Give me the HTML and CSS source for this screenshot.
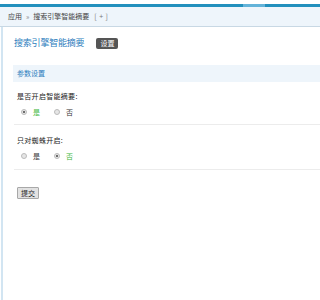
FILE: index.html
```html
<!DOCTYPE html>
<html lang="zh">
<head>
<meta charset="utf-8">
<title>搜索引擎智能摘要</title>
<link rel="stylesheet" href="styles.css">
</head>
<body>
<div class="topbar"><span class="glint"></span></div>
<div class="crumb"><span>应用</span><span class="sep">»</span><span>搜索引擎智能摘要</span><span class="plus">[+]</span></div>
<div class="main">
  <div class="title-row">
    <span class="title">搜索引擎智能摘要</span>
    <span class="badge">设置</span>
  </div>
  <div class="section-head">参数设置</div>
  <div class="field">
    <div class="label">是否开启智能摘要:</div>
    <div class="choices">
      <span class="radio checked"></span><span class="opt on">是</span>
      <span class="radio"></span><span class="opt">否</span>
    </div>
  </div>
  <div class="field">
    <div class="label">只对蜘蛛开启:</div>
    <div class="choices">
      <span class="radio"></span><span class="opt">是</span>
      <span class="radio checked"></span><span class="opt on">否</span>
    </div>
  </div>
  <div class="actions"><button class="submit">提交</button></div>
</div>
</body>
</html>
```
FILE: styles.css
```css
html, body {
  margin: 0;
  padding: 0;
  background: #fff;
  font-family: "Noto Sans CJK SC", "Noto Sans", sans-serif;
}
.topbar {
  margin-top: 4px;
  height: 3px;
  background: #2290bd;
  display: flex;
}
.glint {
  margin-left: 243px;
  width: 22px;
  height: 3px;
  background: #63b3d9;
}
.crumb {
  height: 19px;
  line-height: 19px;
  background: #eef5fb;
  border-bottom: 1px solid #c8d8e4;
  padding-left: 8px;
  font-size: 7px;
  color: #444;
  display: flex;
}
.sep {
  margin: 0 4px;
  color: #888;
}
.plus {
  margin-left: 5px;
  letter-spacing: 2.5px;
  color: #777;
}
.main {
  margin-left: 1px;
  border-left: 2px solid #d2e5f2;
  min-height: 273px;
}
.title-row {
  padding-top: 10px;
  padding-left: 11px;
  height: 12px;
  display: flex;
  align-items: center;
}
.title {
  font-size: 9px;
  line-height: 12px;
  color: #2c7dbd;
  letter-spacing: -0.2px;
}
.badge {
  margin-left: 12px;
  height: 11px;
  line-height: 11px;
  padding: 0 4px;
  background: #555;
  color: #fff;
  font-size: 7px;
  border-radius: 2px;
}
.section-head {
  margin-top: 16px;
  margin-left: 10px;
  height: 17px;
  line-height: 17px;
  padding-left: 4px;
  background: #eef5fb;
  color: #2c7dbd;
  font-size: 7px;
}
.field {
  margin-left: 11px;
  border-bottom: 1px solid #ececec;
  padding-bottom: 6px;
}
.field + .field {
  padding-bottom: 7px;
}
.label {
  margin-top: 8px;
  margin-left: 3px;
  line-height: 12px;
  font-size: 7px;
  color: #1a1a1a;
  letter-spacing: 0.3px;
}
.field + .field .label {
  margin-top: 9px;
}
.choices {
  margin-top: 4px;
  height: 12px;
  display: flex;
  align-items: center;
  padding-left: 7px;
  font-size: 7px;
  color: #333;
}
.radio {
  box-sizing: border-box;
  width: 6px;
  height: 6px;
  border-radius: 50%;
  border: 1px solid #bbb;
  background: #e6e6e6;
  display: flex;
  align-items: center;
  justify-content: center;
}
.radio.checked::after {
  content: "";
  width: 2px;
  height: 2px;
  border-radius: 50%;
  background: #444;
}
.opt {
  margin-left: 6px;
  margin-right: 14px;
}
.opt.on {
  color: #3cb83c;
}
.actions {
  margin-top: 7px;
  margin-left: 14px;
}
.submit {
  box-sizing: border-box;
  height: 12px;
  width: 22px;
  padding: 0;
  font-family: "Noto Sans CJK SC", sans-serif;
  font-size: 7px;
  line-height: 10px;
  color: #222;
  background: #e2e2e2;
  border: 1px solid #a8a8a8;
  border-radius: 1px;
}
```
